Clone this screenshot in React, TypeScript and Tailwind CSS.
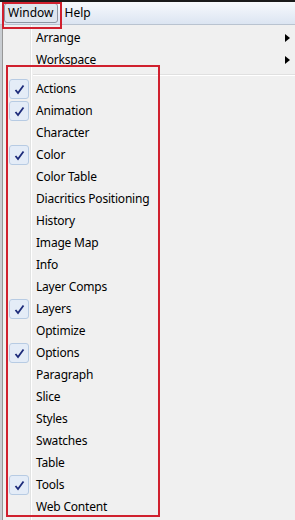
import React from 'react';

const items: { label: string; checked?: boolean }[] = [
  { label: 'Actions', checked: true },
  { label: 'Animation', checked: true },
  { label: 'Character' },
  { label: 'Color', checked: true },
  { label: 'Color Table' },
  { label: 'Diacritics Positioning' },
  { label: 'History' },
  { label: 'Image Map' },
  { label: 'Info' },
  { label: 'Layer Comps' },
  { label: 'Layers', checked: true },
  { label: 'Optimize' },
  { label: 'Options', checked: true },
  { label: 'Paragraph' },
  { label: 'Slice' },
  { label: 'Styles' },
  { label: 'Swatches' },
  { label: 'Table' },
  { label: 'Tools', checked: true },
  { label: 'Web Content' },
];

function Check() {
  return (
    <div className="w-[20px] h-[20px] rounded-[3px] border border-[#b7cbe3] bg-[#e4ecf7] flex items-center justify-center">
      <svg width="11" height="11" viewBox="0 0 11 11">
        <path d="M1.5 6 L4 9 L9.5 1.5" stroke="#1d2b7a" strokeWidth="1.8" fill="none" />
      </svg>
    </div>
  );
}

function MenuRow({ label, checked, sub }: { label: string; checked?: boolean; sub?: boolean }) {
  return (
    <div className="h-[22px] flex items-center relative">
      <div className="w-[28px] pl-[6px] flex items-center">{checked && <Check />}</div>
      <span className="ml-[5px] flex-1 tracking-[-0.2px]">{label}</span>
      {sub && (
        <svg width="5" height="8" viewBox="0 0 5 8" className="mr-[5px]">
          <path d="M0 0 L5 4 L0 8 Z" fill="#000" />
        </svg>
      )}
    </div>
  );
}

export default function App() {
  return (
    <div
      className="w-[295px] h-[520px] relative overflow-hidden bg-[#f0f0f0] text-[12px] text-black"
      style={{ fontFamily: '"Noto Sans", "Open Sans", sans-serif' }}
    >
      {/* menu bar */}
      <div className="h-[25px] border-t-2 border-[#1a1a1a] border-b border-b-[#b9c3d0] bg-gradient-to-b from-[#f7f9fc] to-[#dce5f2] flex items-center">
        <div className="ml-[4px] h-[20px] px-[3px] flex items-center rounded-[3px] border border-[#8d96a2] bg-[#dfe6ee]">Window</div>
        <div className="ml-[5px] px-[2px]">Help</div>
      </div>

      {/* dropdown */}
      <div className="flex">
        <div className="w-[3px] h-[495px] bg-[#c9cdd2] border-r border-[#979797]" />
        <div className="flex-1 relative pt-[2px]">
          <div className="absolute left-[27px] top-0 bottom-0 w-[2px] border-l border-[#e2e3e3] bg-white" />
          <MenuRow label="Arrange" sub />
          <MenuRow label="Workspace" sub />
          <div className="h-[7px] flex items-center pl-[30px]">
            <div className="flex-1 h-[2px] border-t border-[#e0e0e0] bg-white" />
          </div>
          {items.map((it) => (
            <MenuRow key={it.label} label={it.label} checked={it.checked} />
          ))}
        </div>
      </div>

      {/* red highlight boxes */}
      <div className="absolute left-[2px] top-[2px] w-[60px] h-[27px] border-2 border-[#d0202e]" />
      <div className="absolute left-[6px] top-[65px] w-[154px] h-[452px] border-2 border-[#d0202e]" />
    </div>
  );
}
